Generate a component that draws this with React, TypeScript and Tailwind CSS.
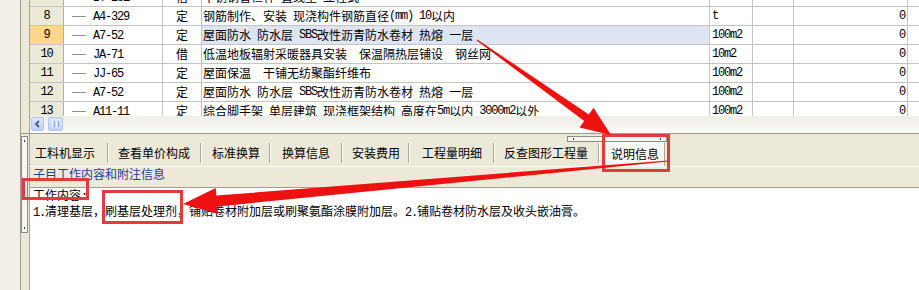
import React from 'react'

// splits a label into CJK runs (12px Noto CJK) and ASCII runs (6px-wide mono), like the old SimSun grid
function T({ s }: { s: string }) {
  const parts = s.split(/([\x20-\x7e]+)/).filter((p) => p !== '')
  return (
    <>
      {parts.map((p, i) =>
        /^[\x20-\x7e]+$/.test(p) ? (
          <span key={i} className="font-['Liberation_Mono',monospace] text-[12px] tracking-[-1.2px] whitespace-pre">
            {p}
          </span>
        ) : (
          <span key={i}>{p}</span>
        )
      )}
    </>
  )
}

const rows = [
  { no: 7, code: 'BT-281', type: '借', desc: '不锈钢管栏杆 直线型 立柱式', unit: '10m', sel: false },
  { no: 8, code: 'A4-329', type: '定', desc: '钢筋制作、安装 现浇构件钢筋直径(mm) 10以内', unit: 't', sel: false },
  { no: 9, code: 'A7-52', type: '定', desc: '屋面防水 防水层 SBS改性沥青防水卷材 热熔 一层', unit: '100m2', sel: true },
  { no: 10, code: 'JA-71', type: '借', desc: '低温地板辐射采暖器具安装  保温隔热层铺设  钢丝网', unit: '10m2', sel: false },
  { no: 11, code: 'JJ-65', type: '定', desc: '屋面保温  干铺无纺聚酯纤维布', unit: '100m2', sel: false },
  { no: 12, code: 'A7-52', type: '定', desc: '屋面防水 防水层 SBS改性沥青防水卷材 热熔 一层', unit: '100m2', sel: false },
  { no: 13, code: 'A11-11', type: '定', desc: '综合脚手架 单层建筑 现浇框架结构 高度在5m以内 3000m2以外', unit: '100m2', sel: false },
]

const tabs = [
  { label: '工料机显示', cls: 'w-[77px] pl-[5px]' },
  { label: '查看单价构成', cls: 'w-[91px] pl-[9px]' },
  { label: '标准换算', cls: 'w-[67px] pl-[10px]' },
  { label: '换算信息', cls: 'w-[70px] pl-[11px]' },
  { label: '安装费用', cls: 'w-[65px] pl-[9px]' },
  { label: '工程量明细', cls: 'w-[83px] pl-[12px]' },
  { label: '反查图形工程量', cls: 'w-[103px] pl-[9px]' },
]

function Row({ r }: { r: (typeof rows)[number] }) {
  return (
    <div className="flex h-[19px] border-b border-[#c4c4c4]">
      <div
        className={
          'w-[34px] shrink-0 border-r border-[#b3b1a6] flex items-center justify-center ' +
          (r.sel ? 'bg-[#ffd68c]' : 'bg-[#ece9d8]')
        }
      >
        <T s={String(r.no)} />
      </div>
      <div className="w-[99px] shrink-0 border-r border-[#c4c4c4] flex items-center">
        <span className="ml-[8px] w-[14px] h-px bg-[#8f8f8f]" />
        <span className="ml-[7px]">
          <T s={r.code} />
        </span>
      </div>
      <div className="w-[39px] shrink-0 border-r border-[#c4c4c4] flex items-center justify-center">{r.type}</div>
      <div
        className={
          'w-[508px] shrink-0 border-r border-[#c4c4c4] flex items-center pl-[1px] whitespace-pre overflow-hidden ' +
          (r.sel ? 'bg-[#dde5f2]' : '')
        }
      >
        <T s={r.desc} />
      </div>
      <div className="w-[43px] shrink-0 border-r border-[#c4c4c4] flex items-center pl-[2px]">
        <T s={r.unit} />
      </div>
      <div className="w-[41px] shrink-0 border-r border-[#c4c4c4]" />
      <div className="w-[114px] shrink-0 border-r border-[#c4c4c4] flex items-center justify-end pr-[2px]">
        <T s="0" />
      </div>
      <div className="flex-1" />
    </div>
  )
}

export default function App() {
  return (
    <div className="relative w-[919px] h-[290px] overflow-hidden flex bg-[#f2f0e6] text-[12px] leading-[14px] text-black font-['Noto_Sans_CJK_SC','Noto_Sans_CJK_TC',sans-serif]">
      <div className="w-[20px] shrink-0" />
      <div className="flex-1 flex flex-col border-l border-[#9d9b92]">
        {/* grid of quota items */}
        <div className="h-[133px] flex shrink-0">
          <div className="w-[9px] shrink-0 bg-[#ece9d8] border-r border-[#a7a59b]" />
          <div className="flex-1 flex flex-col bg-white">
            <div className="h-[116px] overflow-hidden">
              <div className="mt-[-12px]">
                {rows.map((r) => (
                  <Row key={r.no} r={r} />
                ))}
              </div>
            </div>
            <div className="h-[17px] flex items-start pt-[1px] bg-linear-to-b from-[#eeede6] to-[#fbfbf8]">
              <div className="ml-[1px] w-[13px] h-[14px] rounded-[2px] border border-[#b4c6ee] bg-linear-to-b from-[#dde7fd] to-[#bccff8] flex items-center justify-center">
                <svg width="7" height="8" viewBox="0 0 7 8">
                  <path d="M5 1 L2 4 L5 7" fill="none" stroke="#4d6185" strokeWidth="2" />
                </svg>
              </div>
              <div className="ml-[4px] w-[15px] h-[14px] rounded-[2px] border border-[#b4c6ee] bg-linear-to-b from-[#dde7fd] to-[#c2d3f8] flex items-center justify-center gap-[1px]">
                <span className="w-px h-[6px] bg-[#eef3fe]" />
                <span className="w-px h-[6px] bg-[#8ca4d8]" />
                <span className="w-px h-[6px] bg-[#eef3fe]" />
                <span className="w-px h-[6px] bg-[#8ca4d8]" />
              </div>
            </div>
          </div>
        </div>

        {/* detail panel */}
        <div className="flex-1 flex border-t border-[#9d9b92]">
          <div className="w-[9px] shrink-0 bg-[#ece9d8] border-r border-[#a7a59b]">
            <div className="mt-[2px] w-[7px] h-[97px] border border-[#8d8b82] bg-[#f6f5f0] flex flex-col justify-between items-center py-[3px]">
              <span className="w-px h-[2px] bg-[#333]" />
              <span className="w-px h-[2px] bg-[#333]" />
            </div>
          </div>
          <div className="flex-1 flex flex-col bg-[#ece9d8]">
            <div className="relative h-[33px] shrink-0 border-b border-white flex items-start">
              <div className="absolute left-[537px] top-[2px] w-[100px] h-[6px] border border-[#8d8b82] bg-[#f7f6f1] flex items-center justify-between px-[5px]">
                <span className="w-px h-[2px] bg-[#333]" />
                <span className="w-px h-[2px] bg-[#333]" />
              </div>
              {tabs.map((t) => (
                <React.Fragment key={t.label}>
                  <div className={t.cls + ' shrink-0 mt-[12px] whitespace-nowrap'}>{t.label}</div>
                  <div className="w-[2px] h-[20px] mt-[9px] shrink-0 border-l border-[#aca899] border-r border-r-white" />
                </React.Fragment>
              ))}
              <div className="ml-[5px] mt-[8px] w-[60px] h-[24px] shrink-0 pl-[5px] pt-[4px] bg-[#f8f7f3] border-l border-t border-white border-r border-r-[#aca899] whitespace-nowrap">
                说明信息
              </div>
            </div>
            <div className="h-[21px] shrink-0 border-b border-[#a19f94] pl-[3px] text-[#1f3d9e]">
              子目工作内容和附注信息
            </div>
            <div className="flex-1 bg-white pl-[3px] leading-[13px]">
              <div>
                <T s="工作内容:" />
              </div>
              <div className="whitespace-nowrap">
                <T s="1.清理基层，刷基层处理剂，铺贴卷材附加层或刷聚氨酯涂膜附加层。2.铺贴卷材防水层及收头嵌油膏。" />
              </div>
            </div>
          </div>
        </div>
      </div>

      {/* annotation boxes */}
      <div className="absolute left-[602px] top-[134px] w-[68px] h-[38px] border-[3px] border-[#e23b3b]" />
      <div className="absolute left-[22px] top-[178px] w-[67px] h-[22px] border-[3px] border-[#e23b3b]" />
      <div className="absolute left-[102px] top-[190px] w-[81px] h-[34px] border-[3px] border-[#e23b3b]" />

      {/* annotation arrows */}
      <svg className="absolute left-0 top-0 pointer-events-none" width="919" height="290" viewBox="0 0 919 290">
        <polygon
          fill="#ee1111"
          points="476.65,40.49 584.22,120.91 579.59,127.44 611,135 593.47,107.86 588.84,114.39 477.35,39.51"
        />
        <polygon
          fill="#ee1111"
          points="667.95,160.4 216.38,195.52 215.72,188.05 183,204 218.02,213.95 217.36,206.48 668.05,161.6"
        />
      </svg>
    </div>
  )
}
